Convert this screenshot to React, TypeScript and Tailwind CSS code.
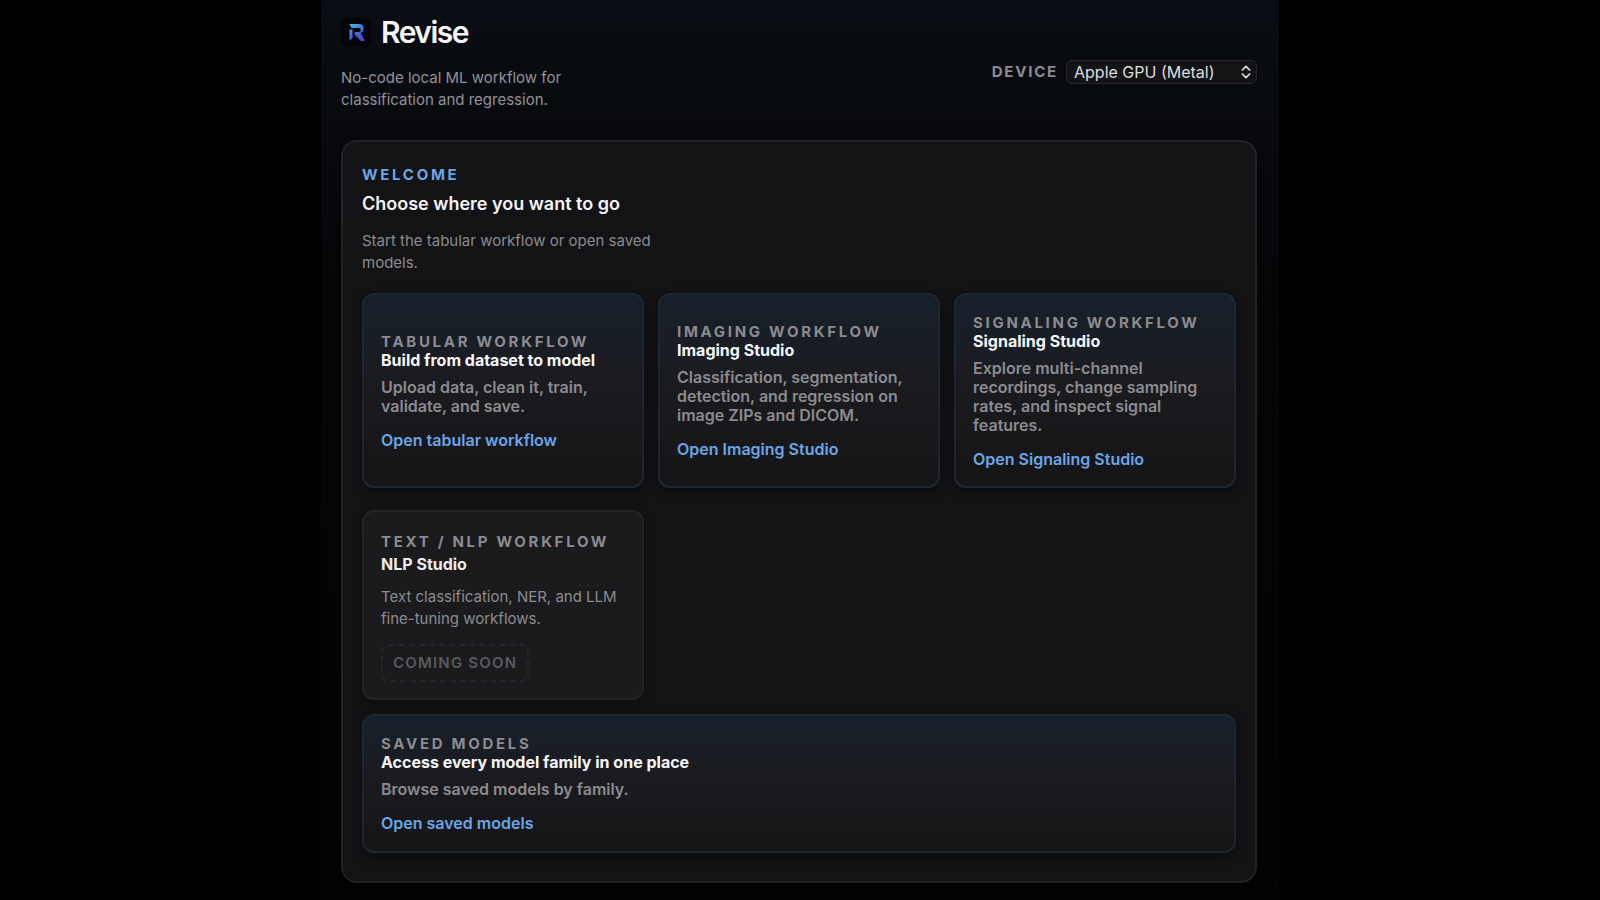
import type { ReactNode } from "react";

type CardProps = {
  label: string;
  title: string;
  text: string;
  action: string;
  wide?: boolean;
};

function Eyebrow({ children }: { children: ReactNode }) {
  return (
    <span className="block text-[15px] font-bold tracking-[0.18em] text-[#8b8b90] uppercase">{children}</span>
  );
}

function WorkflowCard({ label, title, text, action, wide }: CardProps) {
  return (
    <button
      type="button"
      className={
        "flex cursor-pointer flex-col justify-center rounded-xl border-2 border-[#1d2732] bg-linear-to-b from-[#17202a] via-[#1b1b1f] via-50% to-[#151517] px-[17px] py-4 text-left text-base leading-[19px] font-semibold shadow-[0_4px_12px_rgba(0,0,0,0.35)] " +
        (wide ? "col-span-3 min-h-[139px]" : "min-h-[195px]")
      }
    >
      <span className="block leading-[19px]">
        <Eyebrow>{label}</Eyebrow>
      </span>
      <span className="block font-bold text-[#f7f7f8]">{title}</span>
      <span className="mt-2 block text-[#8b8b90]">{text}</span>
      <span className="mt-[15px] block text-[#6aa6e8]">{action}</span>
    </button>
  );
}

function Logo() {
  return (
    <svg viewBox="0 0 30 30" className="size-[30px] shrink-0" aria-hidden="true">
      <defs>
        <linearGradient id="mark" x1="9" y1="8" x2="20" y2="24" gradientUnits="userSpaceOnUse">
          <stop offset="0" stopColor="#4cb4dc" />
          <stop offset="0.5" stopColor="#3c72d6" />
          <stop offset="1" stopColor="#5f35cc" />
        </linearGradient>
      </defs>
      <rect width="30" height="30" rx="7" fill="#05060a" />
      <path
        fill="url(#mark)"
        d="M8.500 7h9.200c3.200 0 5 1.700 5 4.500 0 2.300-1.100 3.900-3.100 4.500L24 24h-4.200l-6.600-7 1.100-2h3.400c1.300 0 2-.6 2-1.900 0-1.300-.7-2-2-2H10.500zM8.500 12.500h3V21l-3 2.700z"
      />
    </svg>
  );
}

export default function App() {
  return (
    <div className="min-h-screen bg-black font-[Inter,sans-serif] text-[15px] antialiased">
      <div className="mx-auto min-h-screen max-w-[958px] bg-linear-to-b from-[#0a0d13] via-[#060709] via-30% to-[#030303] pr-[22px] pb-[18px] pl-5">
        <header className="flex items-center justify-between pt-[14px] pb-2.5">
          <div>
            <div className="flex items-center gap-2.5">
              <Logo />
              <h1 className="text-[30px] leading-9 font-semibold tracking-tighter text-[#f5f5f7]">Revise</h1>
            </div>
            <p className="mt-[17px] mb-[19px] max-w-[300px] leading-[22px] text-[#929297]">
              No-code local ML workflow for classification and regression.
            </p>
          </div>
          <div className="flex items-center gap-2">
            <label htmlFor="device" className="font-bold tracking-[0.12em] text-[#8b8b90] uppercase">
              Device
            </label>
            <div className="relative">
              <select
                id="device"
                className="h-6 w-[191px] appearance-none rounded-md border border-[#27272a] bg-[#141416] pr-6 pl-[7px] text-base leading-5 text-[#dededf]"
              >
                <option>Apple GPU (Metal)</option>
              </select>
              <svg
                viewBox="0 0 10 14"
                className="pointer-events-none absolute top-[5px] right-1.5 h-[14px] w-2.5"
                fill="none"
                stroke="#dededf"
                strokeWidth="1.700"
                strokeLinecap="round"
                strokeLinejoin="round"
                aria-hidden="true"
              >
                <path d="M1.300 5 5 1.300 8.700 5M1.300 9 5 12.700 8.700 9" />
              </svg>
            </div>
          </div>
        </header>

        <main className="rounded-2xl border-2 border-[#222225] bg-[#131315] px-[19px] pt-[21px] pb-7 shadow-[0_6px_16px_rgba(0,0,0,0.6)]">
          <p className="leading-6 font-bold tracking-[0.18em] text-[#6aa6e8] uppercase">Welcome</p>
          <h2 className="mt-[5px] text-lg leading-6 font-semibold text-[#f5f5f7]">Choose where you want to go</h2>
          <p className="mt-3.5 max-w-[300px] leading-[22px] text-[#8b8b90]">
            Start the tabular workflow or open saved models.
          </p>

          <div className="mt-[19px] grid grid-cols-3 gap-x-3.5">
            <WorkflowCard
              label="Tabular workflow"
              title="Build from dataset to model"
              text="Upload data, clean it, train, validate, and save."
              action="Open tabular workflow"
            />
            <WorkflowCard
              label="Imaging workflow"
              title="Imaging Studio"
              text="Classification, segmentation, detection, and regression on image ZIPs and DICOM."
              action="Open Imaging Studio"
            />
            <WorkflowCard
              label="Signaling workflow"
              title="Signaling Studio"
              text="Explore multi-channel recordings, change sampling rates, and inspect signal features."
              action="Open Signaling Studio"
            />
            <section className="mt-[22px] mb-3.5 rounded-xl border-2 border-[#242427] bg-[#1b1b1e] px-[17px] pt-[19px] pb-4 leading-[22px] shadow-[0_4px_12px_rgba(0,0,0,0.35)]">
              <Eyebrow>Text / NLP workflow</Eyebrow>
              <h3 className="text-base leading-[22px] font-bold text-[#ececee]">NLP Studio</h3>
              <p className="mt-[11px] text-[#8b8b90]">Text classification, NER, and LLM fine-tuning workflows.</p>
              <span className="mt-3.5 inline-block rounded-lg border-2 border-dashed border-[#252529] px-2.5 py-1.5 font-semibold tracking-[0.08em] text-[#5a5a5f] uppercase">
                Coming soon
              </span>
            </section>
            <WorkflowCard
              wide
              label="Saved models"
              title="Access every model family in one place"
              text="Browse saved models by family."
              action="Open saved models"
            />
          </div>
        </main>
      </div>
    </div>
  );
}
